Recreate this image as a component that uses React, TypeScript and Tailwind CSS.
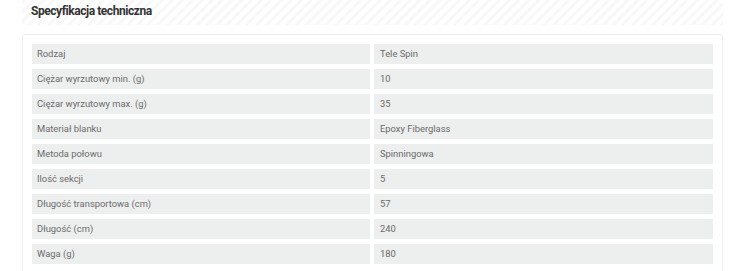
const specs: [string, string][] = [
  ["Rodzaj", "Tele Spin"],
  ["Ciężar wyrzutowy min. (g)", "10"],
  ["Ciężar wyrzutowy max. (g)", "35"],
  ["Materiał blanku", "Epoxy Fiberglass"],
  ["Metoda połowu", "Spinningowa"],
  ["Ilość sekcji", "5"],
  ["Długość transportowa (cm)", "57"],
  ["Długość (cm)", "240"],
  ["Waga (g)", "180"],
];

export default function App() {
  return (
    <div className="w-[750px] h-[271px] overflow-hidden bg-white font-['Roboto',sans-serif]">
      <div className="ml-[22px] w-[701px]">
        {/* striped title band */}
        <div className="h-[25px] flex items-center pl-[9px] pb-[4px] bg-[repeating-linear-gradient(135deg,#f8f8f8_0px,#f8f8f8_3px,#ffffff_3px,#ffffff_7px)]">
          <h2 className="text-[12px] font-bold tracking-[-0.45px] text-[#333] leading-none">
            Specyfikacja techniczna
          </h2>
        </div>

        <div className="mt-[9px] border border-[#eeeeee] rounded-[3px] pt-[9px] px-[9px] pb-[12px] flex flex-col gap-[5px]">
          {specs.map(([label, value]) => (
            <div key={label} className="grid grid-cols-[338px_339px] gap-[4px] h-[20px]">
              <div className="bg-[#edeeee] flex items-center pl-[5px] text-[9.4px] text-[#6b6b6b]">{label}</div>
              <div className="bg-[#edeeee] flex items-center pl-[6px] text-[9.4px] text-[#6b6b6b]">{value}</div>
            </div>
          ))}
        </div>
      </div>
    </div>
  );
}
